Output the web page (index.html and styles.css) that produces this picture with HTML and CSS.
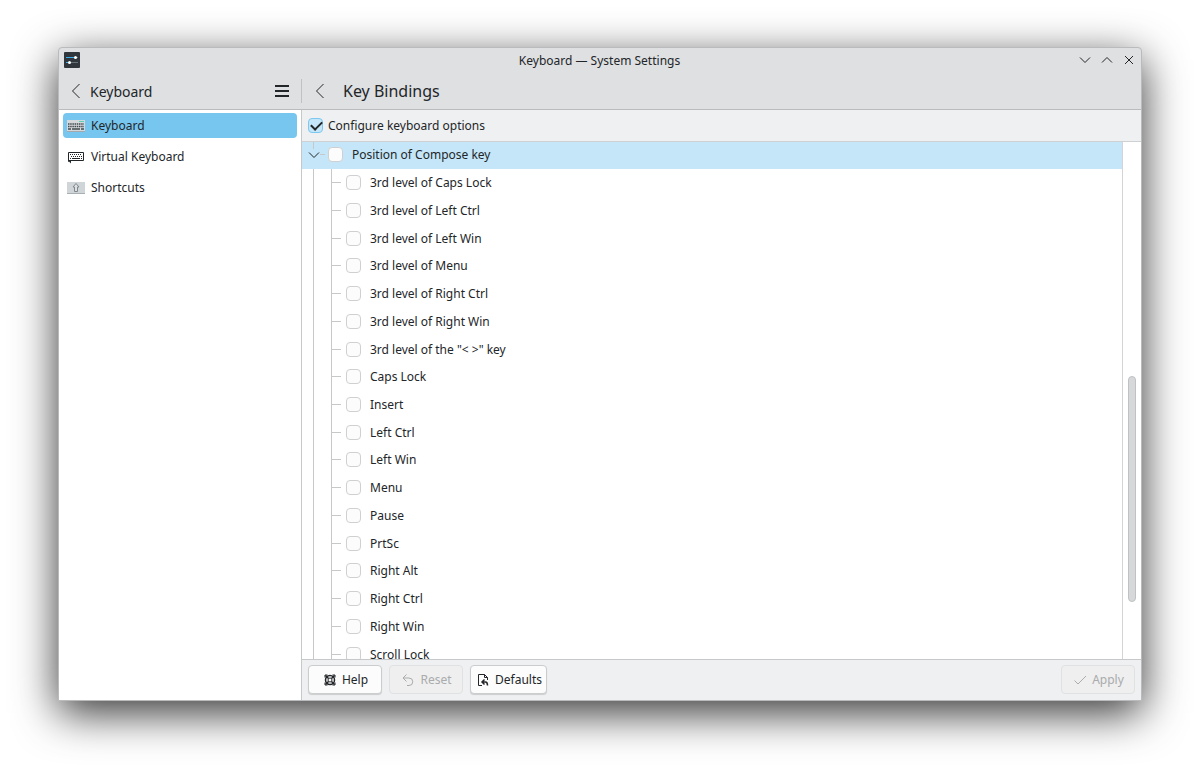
FILE: index.html
```html
<!DOCTYPE html>
<html lang="en">
<head>
<meta charset="utf-8">
<title>Keyboard — System Settings</title>
<link rel="stylesheet" href="styles.css">
</head>
<body>
<div class="window">
  <header class="titlebar">
    <svg class="app-icon" width="16" height="16" viewBox="0 0 16 16"><rect width="16" height="16" rx="1" fill="#30363b"/><path d="M2 5.500h9M2 10.500h3" stroke="#3daee9"/><path d="M12 5.500h2M7 10.500h7" stroke="#66717a"/><circle cx="11.500" cy="5.500" r="1.500" fill="#fff"/><circle cx="5.500" cy="10.500" r="1.500" fill="#fff"/></svg>
    <h1 class="window-title">Keyboard — System Settings</h1>
    <div class="window-controls">
      <button class="icon-button" aria-label="Minimize"><svg width="12" height="12" viewBox="0 0 12 12"><path d="M1 3.500l5 5 5-5"/></svg></button>
      <button class="icon-button" aria-label="Maximize"><svg width="12" height="12" viewBox="0 0 12 12"><path d="M1 8.500l5-5 5 5"/></svg></button>
      <button class="icon-button" aria-label="Close"><svg width="12" height="12" viewBox="0 0 12 12"><path d="M2 2l8 8M10 2l-8 8"/></svg></button>
    </div>
  </header>
  <div class="toolbar">
    <div class="toolbar-side">
      <button class="icon-button" aria-label="Back"><svg width="16" height="16" viewBox="0 0 16 16"><path d="M11.500 1l-7 7 7 7"/></svg></button>
      <span class="side-title">Keyboard</span>
      <button class="icon-button menu-button" aria-label="Menu"><svg width="16" height="16" viewBox="0 0 16 16"><path d="M1 3h14M1 8h14M1 13h14" stroke-width="2"/></svg></button>
    </div>
    <div class="toolbar-main">
      <button class="icon-button" aria-label="Back"><svg width="16" height="16" viewBox="0 0 16 16"><path d="M11.500 1l-7 7 7 7"/></svg></button>
      <h2 class="page-title">Key Bindings</h2>
    </div>
  </div>
  <div class="content">
    <nav class="sidebar">
      <a class="side-link selected" href="#keyboard"><svg width="18" height="16" viewBox="0 0 18 16"><rect y="2" width="18" height="12" fill="#d5d9dc"/><path d="M12 3.500h5" stroke="#5fd0b5"/><path d="M1 6h16M1 8.500h16" stroke="#42494e" stroke-width="1.500" stroke-dasharray="1.500 .7"/><path d="M1 11h3M5 11h8M14 11h3" stroke="#42494e" stroke-width="1.500"/><path d="M0 13.500h18" stroke="#a3a9ad"/></svg>Keyboard</a>
      <a class="side-link" href="#virtual"><svg width="18" height="16" viewBox="0 0 18 16"><path d="M1.500 3.500h15v8h-15z" fill="#fff" stroke="#232629"/><path d="M3 5.500h12M4 7.500h11" stroke="#232629" stroke-dasharray="1 1"/><path d="M3 9.500h1M5 9.500h8M14 9.500h1" stroke="#232629"/><path d="M1 11v2l1-.5 2 2v-3.500z" fill="#232629"/></svg>Virtual Keyboard</a>
      <a class="side-link" href="#shortcuts"><svg width="18" height="16" viewBox="0 0 18 16"><rect y="2" width="18" height="12" fill="#d0d5d8"/><path d="M0 13.500h18" stroke="#a9b0b4"/><path d="M9 3.500L6 7h1.500v4.500h3V7H12z" fill="#dce0e2" stroke="#7f898f"/></svg>Shortcuts</a>
    </nav>
    <main class="main">
      <div class="options"><label class="option"><input class="check" type="checkbox" checked>Configure keyboard options</label></div>
      <div class="tree-view">
        <ul class="tree">
          <li class="tree-row parent"><button class="expander" aria-label="Collapse"><svg width="12" height="12" viewBox="0 0 12 12"><path d="M1 3.500l5 5 5-5"/></svg></button><label class="option"><input class="check" type="checkbox">Position of Compose key</label></li>
          <li class="tree-row"><label class="option"><input class="check" type="checkbox">3rd level of Caps Lock</label></li>
          <li class="tree-row"><label class="option"><input class="check" type="checkbox">3rd level of Left Ctrl</label></li>
          <li class="tree-row"><label class="option"><input class="check" type="checkbox">3rd level of Left Win</label></li>
          <li class="tree-row"><label class="option"><input class="check" type="checkbox">3rd level of Menu</label></li>
          <li class="tree-row"><label class="option"><input class="check" type="checkbox">3rd level of Right Ctrl</label></li>
          <li class="tree-row"><label class="option"><input class="check" type="checkbox">3rd level of Right Win</label></li>
          <li class="tree-row"><label class="option"><input class="check" type="checkbox">3rd level of the "&lt; &gt;" key</label></li>
          <li class="tree-row"><label class="option"><input class="check" type="checkbox">Caps Lock</label></li>
          <li class="tree-row"><label class="option"><input class="check" type="checkbox">Insert</label></li>
          <li class="tree-row"><label class="option"><input class="check" type="checkbox">Left Ctrl</label></li>
          <li class="tree-row"><label class="option"><input class="check" type="checkbox">Left Win</label></li>
          <li class="tree-row"><label class="option"><input class="check" type="checkbox">Menu</label></li>
          <li class="tree-row"><label class="option"><input class="check" type="checkbox">Pause</label></li>
          <li class="tree-row"><label class="option"><input class="check" type="checkbox">PrtSc</label></li>
          <li class="tree-row"><label class="option"><input class="check" type="checkbox">Right Alt</label></li>
          <li class="tree-row"><label class="option"><input class="check" type="checkbox">Right Ctrl</label></li>
          <li class="tree-row"><label class="option"><input class="check" type="checkbox">Right Win</label></li>
          <li class="tree-row"><label class="option"><input class="check" type="checkbox">Scroll Lock</label></li>
        </ul>
        <div class="scrollbar"><div class="scroll-before"></div><div class="scroll-thumb"></div><div class="scroll-after"></div></div>
      </div>
      <footer class="footer">
        <button class="button help"><svg width="16" height="16" viewBox="0 0 16 16"><circle cx="8" cy="8" r="4.500" stroke-width="1.500"/><circle cx="8" cy="8" r="2"/><path d="M3.500 3.500l3 3M12.500 3.500l-3 3M3.500 12.500l3-3M12.500 12.500l-3-3" stroke-width="1.500"/><path d="M5.500 3H3v2.500M10.500 3H13v2.500M5.500 13H3v-2.500M10.500 13H13v-2.500"/></svg>Help</button>
        <button class="button" disabled><svg width="16" height="16" viewBox="0 0 16 16"><path d="M6.500 2.500l-3.500 3.500 3.500 3.500M3 6h6a3.700 3.700 0 0 1 0 7.500H7"/></svg>Reset</button>
        <button class="button defaults"><svg width="16" height="16" viewBox="0 0 16 16"><path d="M7 13.500H3.500v-11h6l3 3V8M9.500 2.500v3h3"/><path d="M9.500 7.500L7 10l2.500 2.500M7 10h3.500q2 0 2 3.500" stroke-width="1.500"/></svg>Defaults</button>
        <button class="button apply" disabled><svg width="16" height="16" viewBox="0 0 16 16"><path d="M2.500 8.500l3.500 3.500 8-8"/></svg>Apply</button>
      </footer>
    </main>
  </div>
</div>
</body>
</html>
```

FILE: styles.css
```css
* { box-sizing: border-box; }
body {
  margin: 0;
  padding: 47px 58px 69px;
  height: 100vh;
  display: flex;
  background: #fff;
  color: #232629;
  font: 12px/17px "Noto Sans", sans-serif;
}
button { font: inherit; color: inherit; }
svg { flex: none; fill: none; stroke: none; }
h1, h2, ul { margin: 0; padding: 0; font-size: inherit; font-weight: 400; }

.window {
  flex: 1;
  min-width: 0;
  display: flex;
  flex-direction: column;
  overflow: hidden;
  border: 1px solid #b9bbbd;
  border-radius: 4px 4px 0 0;
  background: #dee0e2;
  box-shadow: 0 12px 44px rgba(0, 0, 0, .8);
}
.titlebar {
  display: grid;
  grid-template-columns: 72px 1fr 72px;
  align-items: center;
  height: 24px;
  padding: 0 6px 0 5px;
}
.window-title { text-align: center; }
.window-controls { display: flex; justify-content: flex-end; gap: 10px; }
.icon-button, .expander {
  display: flex;
  padding: 0;
  border: 0;
  background: none;
  stroke: #232629;
}
.icon-button svg, .expander svg, .button svg { stroke: inherit; }

.toolbar {
  display: grid;
  grid-template-columns: 243px 1fr;
  height: 38px;
  border-bottom: 1px solid #b9bbbd;
}
.toolbar-side, .toolbar-main { display: flex; align-items: center; }
.toolbar-side {
  margin: 7px 0 6px;
  padding: 0 11px 0 9px;
  gap: 6px;
  border-right: 1px solid #bfc1c3;
}
.side-title { font-size: 14px; }
.menu-button { margin-left: auto; }
.toolbar-main { padding: 1px 0 0 10px; gap: 15px; }
.page-title { font-size: 16px; line-height: 22px; }

.content { flex: 1; min-height: 0; display: grid; grid-template-columns: 243px 1fr; }
.sidebar {
  display: flex;
  flex-direction: column;
  gap: 6px;
  padding: 3px 4px;
  border-right: 1px solid #c6c8ca;
  background: #fff;
}
.side-link {
  display: flex;
  align-items: center;
  gap: 6px;
  height: 25px;
  padding-left: 4px;
  border-radius: 4px;
  color: inherit;
  text-decoration: none;
}
.selected { background: #77c6f0; }

.main { display: flex; flex-direction: column; min-width: 0; min-height: 0; background: #eff0f1; }
.options {
  display: flex;
  align-items: center;
  height: 32px;
  padding-left: 6px;
  border-bottom: 1px solid #ced0d2;
}
.option { display: flex; align-items: center; gap: 5px; }
.check {
  position: relative;
  width: 15px;
  height: 15px;
  margin: 0;
  appearance: none;
  border: 1px solid #cfd0d1;
  border-radius: 4px;
  background: #fcfcfc;
}
.check:checked { border-color: #7cc8f0; background: #c4e6f8; }
.check:checked::after {
  content: "";
  position: absolute;
  left: 2px;
  top: 2px;
  width: 9px;
  height: 5px;
  border: solid #232629;
  border-width: 0 0 2px 2px;
  transform: rotate(-45deg);
}

.tree-view {
  flex: 1;
  min-height: 0;
  display: grid;
  grid-template-columns: 1fr 18px;
  overflow: hidden;
  background: #fff;
}
.tree {
  display: grid;
  grid-auto-rows: 1fr;
  margin: -1px 0 -9px;
  border-right: 1px solid #d3d4d5;
  list-style: none;
}
.tree-row {
  display: grid;
  grid-template-columns: 12px 18px 9px 1fr;
  align-items: center;
}
.tree-row .option { gap: 9px; }
.tree-row::before {
  content: "";
  grid-column: 2;
  align-self: stretch;
  margin-left: -1px;
  border: solid #c6c8c9;
  border-width: 0 1px;
}
.tree-row::after { content: ""; grid-column: 3; grid-row: 1; border-top: 1px solid #c6c8c9; }
.tree-row .option { grid-column: 4; grid-row: 1; padding-left: 5px; }
.parent {
  grid-template-columns: 6px 12px 5px 1fr;
  background: #c4e6f8;
}
.parent::before {
  grid-column: 2;
  grid-row: 1;
  align-self: start;
  justify-self: center;
  width: 1px;
  height: 8px;
  margin: 0;
  border-width: 0 0 0 1px;
}
.parent .option { padding-left: 3px; }
.expander { grid-column: 2; grid-row: 1; }

.scrollbar {
  display: grid;
  grid-template-rows: 234fr 227fr 57fr;
  justify-content: center;
}
.scroll-thumb {
  width: 8px;
  border: 1px solid #bfc2c3;
  border-radius: 4px;
  background: #d6d8d9;
}

.footer {
  display: flex;
  gap: 7px;
  padding: 5px 6px 6px;
  border-top: 1px solid #c6c8ca;
}
.button {
  display: flex;
  align-items: center;
  justify-content: center;
  gap: 4px;
  min-width: 74px;
  height: 29px;
  padding: 0 4px;
  border: 1px solid #cbcccd;
  border-radius: 4px;
  background: #fcfcfc;
  box-shadow: 0 1px 1px rgba(0, 0, 0, .15);
  stroke: #232629;
}
.button:disabled {
  border-color: #e0e1e2;
  background: #efefef;
  box-shadow: none;
  color: #a9abad;
  stroke: #a9abad;
}
.apply { margin-left: auto; }
```
